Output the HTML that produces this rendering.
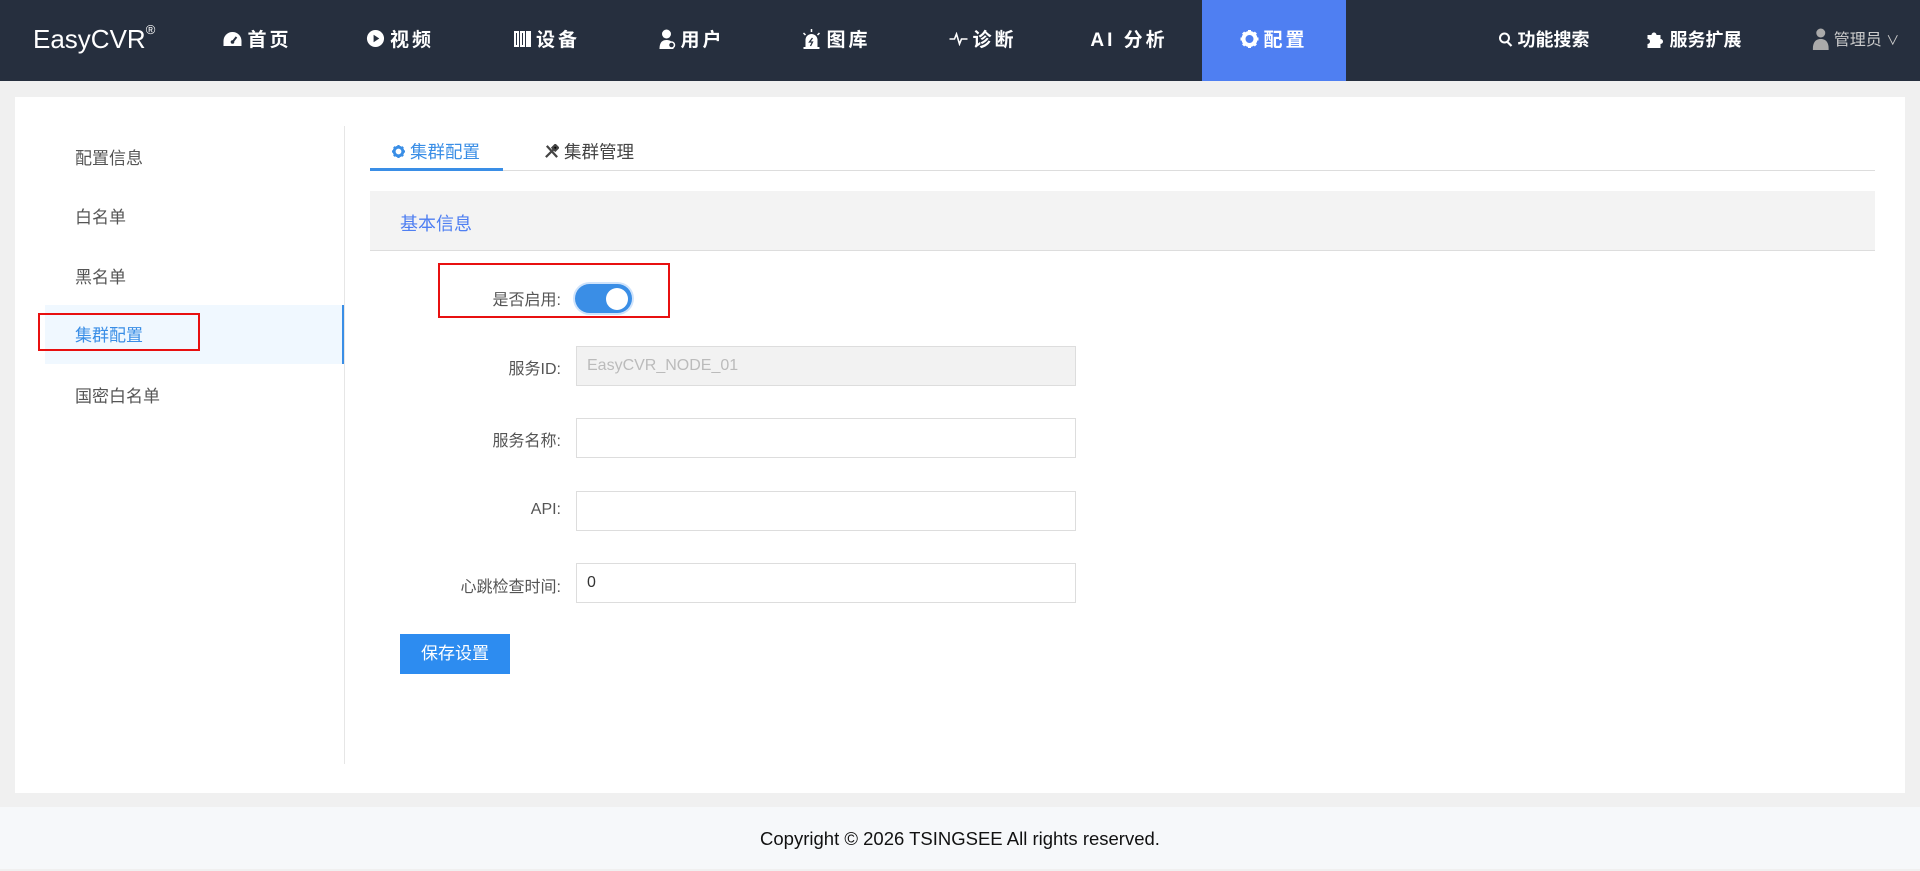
<!DOCTYPE html>
<html><head><meta charset="utf-8"><style>
*{box-sizing:border-box;margin:0;padding:0}
body{width:1920px;height:869px;background:#f0f0f0;font-family:"Liberation Sans","Noto Sans CJK SC",sans-serif;position:relative;overflow:hidden;color:#555}
.hd{position:absolute;left:0;top:0;width:1920px;height:81px;background:#262f3e;color:#fff}
.logo{position:absolute;left:33px;top:24px;font-size:26px;color:#fff}
.logo sup{font-size:13px;vertical-align:top;position:relative;top:-2px}
.nav{position:absolute;top:0;height:81px;line-height:81px;font-size:19px;font-weight:bold;color:#fff;letter-spacing:3px;transform:translateX(-50%);white-space:nowrap}
.act{position:absolute;left:1202px;top:0;width:144px;height:81px;background:#4f7ff2}
.ic{display:inline-block;vertical-align:middle;margin-right:5px;position:relative;top:-2px}
.card{position:absolute;left:15px;top:97px;width:1890px;height:696px;background:#fff}
.side{position:absolute;left:60px;font-size:17px;color:#555}
.ft{position:absolute;left:0;top:807px;width:1920px;height:62px;background:#f6f8fa;text-align:center;line-height:64px;font-size:18.5px;color:#111}
.lbl{position:absolute;right:1359px;font-size:16px;color:#555;text-align:right;white-space:nowrap}
.inp{position:absolute;left:576px;width:500px;height:40px;border:1px solid #ddd;background:#fff;font-size:16px;line-height:38px;padding-left:10px;color:#333}
.red{position:absolute;border:2px solid #e81010}
</style></head><body>
<div class="hd">
<div class="logo">EasyCVR<sup>®</sup></div>
<div class="act"></div>
<div class="nav" style="left:257px"><svg class="ic" width="20" height="16" viewBox="0 0 20 16"><path d="M10 1a9 9 0 0 0-9 9v5h18v-5a9 9 0 0 0-9-9z" fill="#fff"/><path d="M10 11l4-5" stroke="#262f3e" stroke-width="2"/><circle cx="10" cy="11" r="1.8" fill="#262f3e"/></svg>首页</div>
<div class="nav" style="left:400px"><svg class="ic" width="19" height="19" viewBox="0 0 20 20"><circle cx="10" cy="10" r="9" fill="#fff"/><path d="M8 6l6 4-6 4z" fill="#262f3e"/></svg>视频</div>
<div class="nav" style="left:547px"><svg class="ic" width="17" height="16" viewBox="0 0 17 16"><rect x="0" y="0" width="5" height="16" fill="#fff"/><rect x="6" y="0" width="5" height="16" fill="#fff"/><rect x="12" y="0" width="5" height="16" fill="#fff"/><rect x="2" y="2" width="1" height="12" fill="#262f3e"/><rect x="8" y="2" width="1" height="12" fill="#262f3e"/></svg>设备</div>
<div class="nav" style="left:692px"><svg class="ic" width="16" height="20" viewBox="0 0 16 20"><circle cx="7" cy="5" r="4.5" fill="#fff"/><path d="M0 20c0-7 3-9 7-9s7 2 7 9z" fill="#fff"/><circle cx="12" cy="16" r="3" fill="#262f3e" stroke="#fff" stroke-width="1.5"/></svg>用户</div>
<div class="nav" style="left:836px"><svg class="ic" width="20" height="20" viewBox="0 0 20 20"><path d="M4 20v-9a6 6 0 0 1 12 0v9z" fill="#fff"/><rect x="2" y="18" width="16" height="2" fill="#fff"/><path d="M10 0v3M2 4l2 2M18 4l-2 2" stroke="#fff" stroke-width="1.5"/><path d="M11 9l-3 4h3l-2 4" stroke="#262f3e" stroke-width="1.3" fill="none"/></svg>图库</div>
<div class="nav" style="left:983px"><svg class="ic" width="18" height="14" viewBox="0 0 18 14"><path d="M0 7h5l2-5 3 10 2-5h6" stroke="#fff" stroke-width="1.6" fill="none"/></svg>诊断</div>
<div class="nav" style="left:1129px">AI 分析</div>
<div class="nav" style="left:1274px"><svg class="ic" width="18" height="18" viewBox="0 0 18 18"><circle cx="9" cy="9" r="6" fill="none" stroke="#fff" stroke-width="4"/><path d="M9 0v4M9 14v4M0 9h4M14 9h4M2.6 2.6l3 3M12.4 12.4l3 3M2.6 15.4l3-3M12.4 5.6l3-3" stroke="#fff" stroke-width="3"/></svg>配置</div>
<div class="nav" style="left:1544px;font-size:18px;letter-spacing:0"><svg class="ic" width="14" height="15" viewBox="0 0 14 15"><circle cx="6" cy="6" r="4.5" fill="none" stroke="#fff" stroke-width="2"/><path d="M9 10l4 4" stroke="#fff" stroke-width="2.2"/></svg>功能搜索</div>
<div class="nav" style="left:1694px;font-size:18px;letter-spacing:0"><svg class="ic" width="18" height="18" viewBox="0 0 18 18"><path d="M1 5h4a2.5 2.5 0 1 1 5 0h4v4a2.5 2.5 0 1 1 0 5v4H1v-4a2.5 2.5 0 1 0 0-5z" fill="#fff"/></svg>服务扩展</div>
<div class="nav" style="left:1856px;font-size:16px;font-weight:normal;letter-spacing:0;color:#ccc"><svg class="ic" width="16" height="22" viewBox="0 0 16 22"><circle cx="8" cy="5" r="4.5" fill="#aaa"/><path d="M0 22c0-8 3-11 8-11s8 3 8 11z" fill="#aaa"/></svg>管理员 <span style="font-size:13px">∨</span></div>
</div>

<div class="card">
<div class="side" style="top:47px">配置信息</div>
<div class="side" style="top:106px">白名单</div>
<div class="side" style="top:166px">黑名单</div>
<div style="position:absolute;left:30px;top:208px;width:299px;height:59px;background:#f0f8ff;border-right:2px solid #3a8ee6"></div>
<div class="side" style="top:224px;color:#3a8ee6">集群配置</div>
<div class="side" style="top:285px">国密白名单</div>
<div style="position:absolute;left:329px;top:29px;width:1px;height:638px;background:#e6e6e6"></div>
</div>
<div class="red" style="left:38px;top:313px;width:162px;height:38px"></div>

<div style="position:absolute;left:370px;top:170px;width:1505px;height:1px;background:#ddd"></div>
<div style="position:absolute;left:370px;top:168px;width:133px;height:3px;background:#3a8ee6"></div>
<div style="position:absolute;left:392px;top:139px;font-size:17.5px;color:#3a8ee6"><svg class="ic" width="13" height="13" viewBox="0 0 18 18"><circle cx="9" cy="9" r="6" fill="none" stroke="#3a8ee6" stroke-width="4"/><path d="M9 0v4M9 14v4M0 9h4M14 9h4M2.6 2.6l3 3M12.4 12.4l3 3M2.6 15.4l3-3M12.4 5.6l3-3" stroke="#3a8ee6" stroke-width="3"/></svg>集群配置</div>
<div style="position:absolute;left:544px;top:139px;font-size:17.5px;color:#444"><svg class="ic" width="15" height="15" viewBox="0 0 16 16"><path d="M2 14L10 6M12 1l3 3-3 3-3-3zM3 2l11 12" stroke="#444" stroke-width="2.4"/></svg>集群管理</div>

<div style="position:absolute;left:370px;top:191px;width:1505px;height:60px;background:#f3f3f3;border-bottom:1px solid #ddd"></div>
<div style="position:absolute;left:400px;top:210px;font-size:18px;color:#4f7ff2">基本信息</div>

<div class="lbl" style="top:286px">是否启用:</div>
<div style="position:absolute;left:575px;top:284px;width:57px;height:29px;border-radius:15px;background:#3a8ee6;box-shadow:0 0 0 2px #cfe3fb"></div>
<div style="position:absolute;left:606px;top:288px;width:22px;height:22px;border-radius:50%;background:#fff"></div>
<div class="red" style="left:438px;top:263px;width:232px;height:55px"></div>

<div class="lbl" style="top:355px">服务ID:</div>
<div class="inp" style="top:346px;background:#f2f2f2;color:#bbb">EasyCVR_NODE_01</div>
<div class="lbl" style="top:427px">服务名称:</div>
<div class="inp" style="top:418px"></div>
<div class="lbl" style="top:501px">API:</div>
<div class="inp" style="top:491px"></div>
<div class="lbl" style="top:573px">心跳检查时间:</div>
<div class="inp" style="top:563px">0</div>
<div style="position:absolute;left:400px;top:634px;width:110px;height:40px;background:#2d8cf0;color:#fff;font-size:17px;text-align:center;line-height:40px">保存设置</div>

<div class="ft">Copyright © 2026 TSINGSEE All rights reserved.</div>
</body></html>
